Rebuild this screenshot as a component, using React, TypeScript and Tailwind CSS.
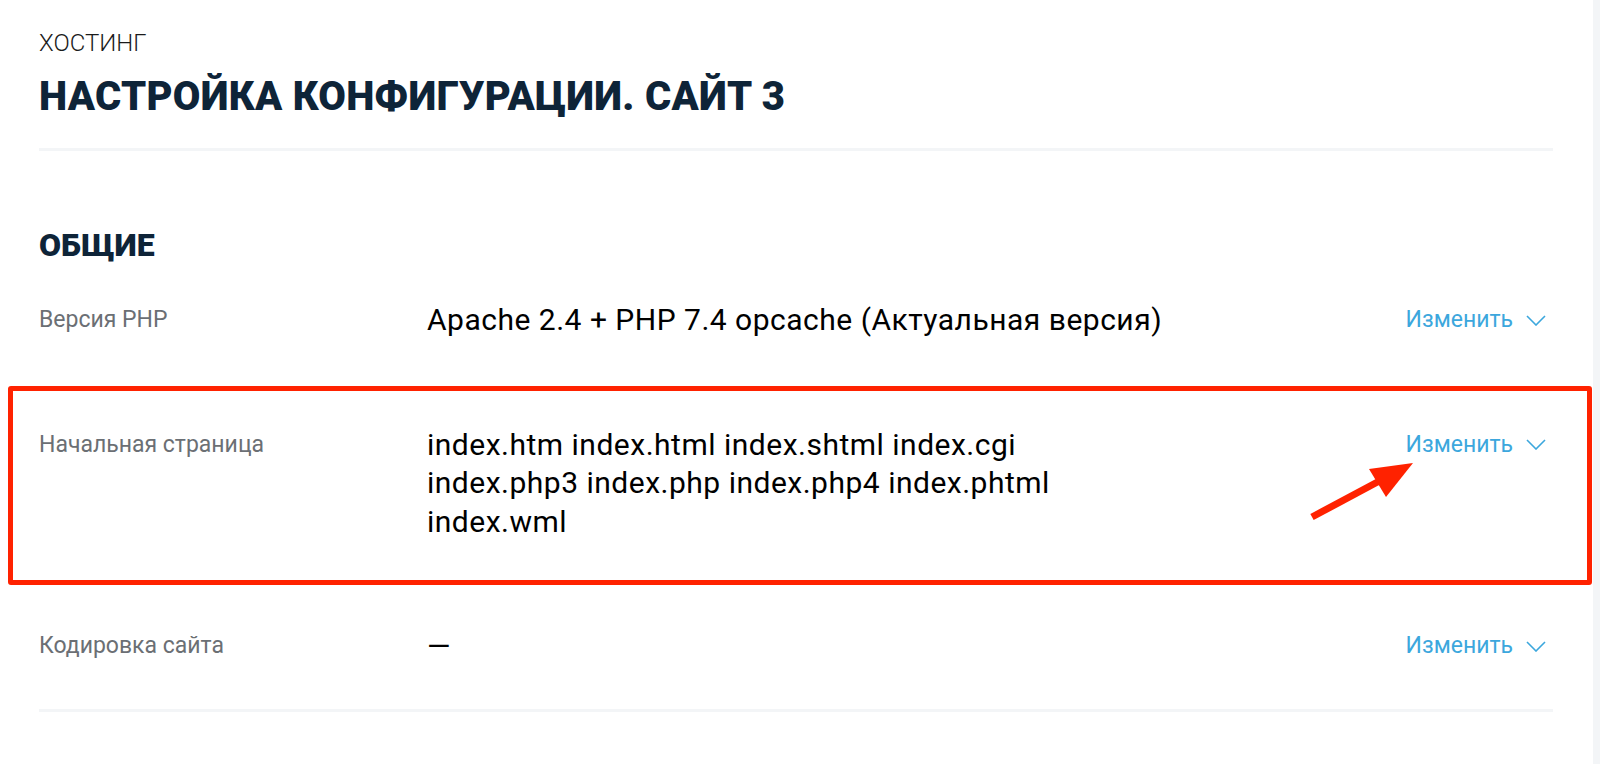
const ROWS = [
  { label: 'Версия PHP', value: ['Apache 2.4 + PHP 7.4 opcache (Актуальная версия)'] },
  {
    label: 'Начальная страница',
    value: [
      'index.htm index.html index.shtml index.cgi',
      'index.php3 index.php index.php4 index.phtml',
      'index.wml',
    ],
  },
  { label: 'Кодировка сайта', value: ['—'] },
]

function Chevron() {
  return (
    <svg width="20" height="11" viewBox="0 0 20 11" fill="none">
      <polyline points="1,1 10,10 19,1" stroke="#3ca7dd" strokeWidth="1.6" />
    </svg>
  )
}

function SettingRow({ label, value }: { label: string; value: string[] }) {
  return (
    <div className="flex items-start py-[43px]">
      <div className="w-[388px] shrink-0 text-[23px] leading-[38px] text-[#6b6f74]">{label}</div>
      <div className="flex-1 text-[30px] leading-[38.5px] tracking-[0.5px] text-black">
        {value.map((line) => (
          <div key={line}>{line}</div>
        ))}
      </div>
      <button className="flex items-center gap-[13px] pr-[7px] text-[23px] leading-[38px] text-[#3ca7dd]">
        Изменить
        <Chevron />
      </button>
    </div>
  )
}

export default function App() {
  return (
    <div className="relative flex min-h-[764px] bg-white font-['Roboto',sans-serif]">
      <div className="flex-1 pl-[39px] pr-[40px] pt-[29px]">
        <div className="text-[24px] leading-[28px] font-light text-[#1b1b1b]">ХОСТИНГ</div>
        <h1 className="mt-[18px] text-[40px] leading-[44px] tracking-[0.3px] font-black text-[#0e2438]">
          НАСТРОЙКА КОНФИГУРАЦИИ. САЙТ 3
        </h1>
        <div className="mt-[29px] h-[3px] bg-[#f3f5f7]" />

        <h2 className="mt-[77px] text-[32px] leading-[34px] font-black text-[#0e2438]">ОБЩИЕ</h2>

        <div className="-mt-[4px]">
          {ROWS.map((row) => (
            <SettingRow key={row.label} label={row.label} value={row.value} />
          ))}
        </div>
        <div className="h-[3px] bg-[#f3f5f7]" />
      </div>
      <div className="w-[7px] bg-[#f3f5f7]" />

      {/* annotation */}
      <div className="pointer-events-none absolute left-[8px] top-[386px] h-[199px] w-[1584px] rounded-[3px] border-[5px] border-[#ff2200]" />
      <svg className="pointer-events-none absolute left-0 top-0" width="1600" height="764">
        <line x1="1312" y1="517" x2="1385" y2="478" stroke="#ff2200" strokeWidth="7" />
        <polygon points="1413,463 1369,469 1386,497" fill="#ff2200" />
      </svg>
    </div>
  )
}
